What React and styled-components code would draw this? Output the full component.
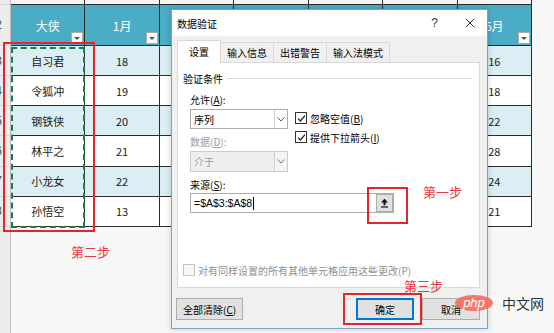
import React from "react";
import styled, { createGlobalStyle } from "styled-components";

const CJK = `"Noto Sans CJK SC", "Noto Sans", sans-serif`;

const GlobalStyle = createGlobalStyle`
  html, body { margin: 0; padding: 0; background: #f7f7f7; }
  body { font-family: ${CJK}; }
  * { box-sizing: border-box; }
`;

// columns 2月–5月 sit under the dialog, so they carry no text
const heads = ["大侠", "1月", "", "", "", "", "6月"];
const rows = [
  ["自习君", 18, "", "", "", "", 16],
  ["令狐冲", 19, "", "", "", "", 18],
  ["钢铁侠", 20, "", "", "", "", 22],
  ["林平之", 21, "", "", "", "", 28],
  ["小龙女", 22, "", "", "", "", 24],
  ["孙悟空", 13, "", "", "", "", 21],
];

const Page = styled.div`
  position: relative;
  width: 554px;
  height: 333px;
  overflow: hidden;
`;

/* ---------- spreadsheet behind the dialog ---------- */
const Sheet = styled.div`
  display: grid;
  grid-template-columns: 11px repeat(7, 74.43px) 1fr;
  grid-template-rows: 5px 41px repeat(6, 30.17px) 1fr;
  width: 554px;
  height: 333px;
  background: #f7f7f7;
`;

const RowNum = styled.div`
  background: #ececec;
  border-right: 1px solid #bdbdbd;
  border-bottom: ${(p) => (p.$last ? "none" : "1px solid #d6d6d6")};
  display: flex;
  align-items: center;
  justify-content: flex-end;
  padding-right: 8px;
  overflow: hidden;
  font: 12px "Liberation Sans", sans-serif;
  color: #555;
`;

const TopCell = styled.div`
  background: #f5f5f5;
  border-right: 1px solid #2b2b2b;
  border-bottom: 1px solid #2b2b2b;
`;

const HeadCell = styled.div`
  position: relative;
  background: #4bacc6;
  border-right: 1px solid #2b2b2b;
  border-bottom: 1px solid #2b2b2b;
  display: flex;
  align-items: center;
  justify-content: center;
  color: #fff;
  font-size: 12px;
`;

const FilterBtn = styled.span`
  position: absolute;
  right: 1px;
  bottom: 1px;
  width: 12px;
  height: 12px;
  background: #fff;
  border: 1px solid #a9a9a9;
  display: flex;
  align-items: center;
  justify-content: center;
  &::after {
    content: "";
    border-left: 3px solid transparent;
    border-right: 3px solid transparent;
    border-top: 3px solid #555;
  }
`;

const Cell = styled.div`
  background: ${(p) => (p.$alt ? "#daeef3" : "#ffffff")};
  border-right: 1px solid #2b2b2b;
  border-bottom: 1px solid #2b2b2b;
  display: flex;
  align-items: center;
  justify-content: center;
  font-size: 11px;
  color: #1a1a1a;
`;

const Filler = styled.div`
  background: #f7f7f7;
`;

const Blank = styled.div`
  grid-column: 2 / -1;
  background: #f7f7f7;
`;

/* ---------- dialog ---------- */
const Dialog = styled.div`
  position: absolute;
  left: 171px;
  top: 9px;
  width: 317px;
  height: 320px;
  background: #f0f0f0;
  border: 1px solid #7ea2c4;
  box-shadow: 0 0 6px rgba(0, 0, 0, 0.18);
  display: flex;
  flex-direction: column;
  font-size: 10px;
  color: #000;
`;

const TitleBar = styled.div`
  height: 26px;
  background: #fff;
  display: flex;
  align-items: center;
  padding-left: 5px;
`;

const TitleText = styled.div`
  flex: 1;
  font-size: 10px;
`;

const TitleBtn = styled.div`
  width: 35px;
  height: 26px;
  display: flex;
  align-items: center;
  justify-content: center;
  font: 12px "Liberation Sans", sans-serif;
  color: #333;
`;

const Body = styled.div`
  padding: 4px 7px 0 5px;
  display: flex;
  flex-direction: column;
`;

const Tabs = styled.div`
  display: flex;
  align-items: flex-end;
  height: 22px;
`;

const Tab = styled.div`
  position: relative;
  z-index: ${(p) => (p.$active ? 1 : 0)};
  height: ${(p) => (p.$active ? "23px" : "20px")};
  margin-bottom: ${(p) => (p.$active ? "-1px" : "0")};
  margin-left: ${(p) => (p.$active ? "0" : "-1px")};
  padding: 0 ${(p) => (p.$active ? "11px" : "6px")};
  padding-bottom: ${(p) => (p.$active ? "2px" : "0")};
  background: ${(p) => (p.$active ? "#fff" : "#f0f0f0")};
  border: 1px solid #d9d9d9;
  border-bottom: none;
  display: flex;
  align-items: center;
`;

const Panel = styled.div`
  height: 226px;
  background: #fff;
  border: 1px solid #d9d9d9;
  padding: 8px 5px 0 5px;
  display: flex;
  flex-direction: column;
`;

const Legend = styled.div`
  height: 14px;
  display: flex;
  align-items: center;
  gap: 4px;
`;

const Rule = styled.div`
  flex: 1;
  height: 1px;
  background: #dcdcdc;
  margin-right: 2px;
`;

const Fields = styled.div`
  padding-left: 7px;
  margin-top: 8px;
  display: flex;
  flex-direction: column;
`;

const FieldGrid = styled.div`
  display: grid;
  grid-template-columns: 98px auto;
  column-gap: 7px;
`;

const Col = styled.div`
  display: flex;
  flex-direction: column;
`;

const Label = styled.div`
  height: 14px;
  line-height: 14px;
  margin-top: ${(p) => p.$mt || 0}px;
  color: ${(p) => (p.$disabled ? "#9d9d9d" : "#000")};
`;

const Select = styled.div`
  margin-top: 2px;
  height: ${(p) => (p.$disabled ? "21px" : "20px")};
  display: flex;
  border: 1px solid ${(p) => (p.$disabled ? "#cccccc" : "#acacac")};
  background: ${(p) => (p.$disabled ? "#efefef" : "#fff")};
  color: ${(p) => (p.$disabled ? "#9d9d9d" : "#000")};
`;

const SelectText = styled.div`
  flex: 1;
  display: flex;
  align-items: center;
  padding-left: 3px;
`;

const SelectArrow = styled.div`
  width: 13px;
  border-left: 1px solid ${(p) => (p.$disabled ? "#cfcfcf" : "#d4d4d4")};
  background: ${(p) => (p.$disabled ? "#f3f3f3" : "#fff")};
  display: flex;
  align-items: center;
  justify-content: center;
`;

const Checks = styled.div`
  padding-top: 19px;
  display: flex;
  flex-direction: column;
  gap: 7px;
`;

const CheckRow = styled.div`
  display: flex;
  align-items: center;
  gap: 3px;
  height: 12px;
  color: ${(p) => (p.$disabled ? "#8f8f8f" : "#000")};
  margin-top: ${(p) => p.$mt || 0}px;
`;

const Box = styled.span`
  width: 12px;
  height: 12px;
  flex: none;
  border: 1px solid ${(p) => (p.$disabled ? "#c4c4c4" : "#333")};
  background: ${(p) => (p.$disabled ? "#f7f7f7" : "#fff")};
  display: flex;
  align-items: center;
  justify-content: center;
`;

const Input = styled.div`
  margin-top: 1px;
  width: 204px;
  height: 20px;
  border: 1px solid #acacac;
  background: #fff;
  display: flex;
  align-items: center;
`;

const InputText = styled.div`
  flex: 1;
  display: flex;
  align-items: center;
  padding-left: 3px;
  font: 10.5px "Liberation Sans", sans-serif;
`;

const Caret = styled.span`
  width: 1px;
  height: 13px;
  background: #000;
  margin-left: 1px;
`;

const RefBtn = styled.div`
  width: 17px;
  height: 18px;
  background: #e1e1e1;
  border: 1px solid #adadad;
  display: flex;
  align-items: center;
  justify-content: center;
`;

const Footer = styled.div`
  margin-top: 10px;
  margin-left: -1px;
  display: flex;
  gap: 8px;
`;

const Spacer = styled.div`
  flex: 1;
`;

const Button = styled.div`
  height: 22px;
  min-width: ${(p) => (p.$wide ? "58px" : "0")};
  padding: 0 6px;
  background: #e1e1e1;
  border: 1px solid ${(p) => (p.$primary ? "#0078d7" : "#adadad")};
  box-shadow: ${(p) => (p.$primary ? "inset 0 0 0 1px #0078d7" : "none")};
  display: flex;
  align-items: center;
  justify-content: center;
`;

/* ---------- annotations over the screenshot ---------- */
const Mark = styled.div`
  position: absolute;
  left: ${(p) => p.$x}px;
  top: ${(p) => p.$y}px;
  width: ${(p) => p.$w}px;
  height: ${(p) => p.$h}px;
  border: 2px ${(p) => (p.$dashed ? "dashed #1e7a4c" : "solid #e3262b")};
  pointer-events: none;
`;

const Note = styled.div`
  position: absolute;
  left: ${(p) => p.$x}px;
  top: ${(p) => p.$y}px;
  font-size: 13px;
  line-height: 16px;
  color: #e6393b;
`;

const Watermark = styled.div`
  position: absolute;
  left: 455px;
  top: 293px;
  display: flex;
  align-items: center;
  gap: 9px;
`;

const PhpBadge = styled.div`
  width: 38px;
  height: 16px;
  border-radius: 50%;
  background: rgba(242, 104, 90, 0.88);
  color: #fff;
  font: italic 13px "Liberation Sans", sans-serif;
  display: flex;
  align-items: center;
  justify-content: center;
  padding-bottom: 2px;
`;

const SiteName = styled.div`
  font-size: 14px;
  color: #333;
`;

const Check = () => (
  <svg width="9" height="9" viewBox="0 0 9 9">
    <path d="M1 4.6 L3.4 7 L8 1.6" fill="none" stroke="#222" strokeWidth="1.3" />
  </svg>
);

const Chevron = ({ color }) => (
  <svg width="8" height="5" viewBox="0 0 8 5">
    <path d="M0.5 0.5 L4 4 L7.5 0.5" fill="none" stroke={color} strokeWidth="1" />
  </svg>
);

export default function App() {
  return (
    <Page>
      <GlobalStyle />
      <Sheet>
        <RowNum />
        {heads.map((h, i) => (
          <TopCell key={i} />
        ))}
        <Filler />
        <RowNum>2</RowNum>
        {heads.map((h, i) => (
          <HeadCell key={i}>
            {h}
            <FilterBtn />
          </HeadCell>
        ))}
        <Filler />
        {rows.map((r, i) => (
          <React.Fragment key={r[0]}>
            <RowNum>{i + 3}</RowNum>
            {r.map((v, j) => (
              <Cell key={j} $alt={i % 2 === 0}>
                {v}
              </Cell>
            ))}
            <Filler />
          </React.Fragment>
        ))}
        <RowNum $last />
        <Blank />
      </Sheet>

      <Dialog>
        <TitleBar>
          <TitleText>数据验证</TitleText>
          <TitleBtn>?</TitleBtn>
          <TitleBtn>
            <svg width="10" height="10" viewBox="0 0 10 10">
              <path d="M0.8 0.8 L9.2 9.2 M9.2 0.8 L0.8 9.2" stroke="#333" strokeWidth="1" />
            </svg>
          </TitleBtn>
        </TitleBar>
        <Body>
          <Tabs>
            <Tab $active>设置</Tab>
            <Tab>输入信息</Tab>
            <Tab>出错警告</Tab>
            <Tab>输入法模式</Tab>
          </Tabs>
          <Panel>
            <Legend>
              <span>验证条件</span>
              <Rule />
            </Legend>
            <Fields>
              <FieldGrid>
                <Col>
                  <Label>
                    允许(<u>A</u>):
                  </Label>
                  <Select>
                    <SelectText>序列</SelectText>
                    <SelectArrow>
                      <Chevron color="#555" />
                    </SelectArrow>
                  </Select>
                  <Label $mt={6} $disabled>
                    数据(<u>D</u>):
                  </Label>
                  <Select $disabled>
                    <SelectText>介于</SelectText>
                    <SelectArrow $disabled>
                      <Chevron color="#777" />
                    </SelectArrow>
                  </Select>
                </Col>
                <Checks>
                  <CheckRow>
                    <Box>
                      <Check />
                    </Box>
                    <span>
                      忽略空值(<u>B</u>)
                    </span>
                  </CheckRow>
                  <CheckRow>
                    <Box>
                      <Check />
                    </Box>
                    <span>
                      提供下拉箭头(<u>I</u>)
                    </span>
                  </CheckRow>
                </Checks>
              </FieldGrid>
              <Label $mt={6}>
                来源(<u>S</u>):
              </Label>
              <Input>
                <InputText>
                  <span>=$A$3:$A$8</span>
                  <Caret />
                </InputText>
                <RefBtn>
                  <svg width="9" height="10" viewBox="0 0 9 10">
                    <path d="M4.5 0.8 L8 4.6 L5.5 4.6 L5.5 7.2 L3.5 7.2 L3.5 4.6 L1 4.6 Z" fill="#111" />
                    <rect x="1" y="8.4" width="7" height="1.2" fill="#111" />
                  </svg>
                </RefBtn>
              </Input>
            </Fields>
            <CheckRow $disabled $mt={51}>
              <Box $disabled />
              <span>对有同样设置的所有其他单元格应用这些更改(P)</span>
            </CheckRow>
          </Panel>
          <Footer>
            <Button>
              <span>
                全部清除(<u>C</u>)
              </span>
            </Button>
            <Spacer />
            <Button $wide $primary>
              确定
            </Button>
            <Button $wide>取消</Button>
          </Footer>
        </Body>
      </Dialog>

      <Mark $dashed $x={11} $y={47} $w={74} $h={181} />
      <Mark $x={3} $y={42} $w={92} $h={190} />
      <Mark $x={367} $y={187} $w={41} $h={37} />
      <Mark $x={343} $y={293} $w={79} $h={32} />
      <Note $x={71} $y={244}>第二步</Note>
      <Note $x={423} $y={184}>第一步</Note>
      <Note $x={404} $y={278}>第三步</Note>

      <Watermark>
        <PhpBadge>php</PhpBadge>
        <SiteName>中文网</SiteName>
      </Watermark>
    </Page>
  );
}
